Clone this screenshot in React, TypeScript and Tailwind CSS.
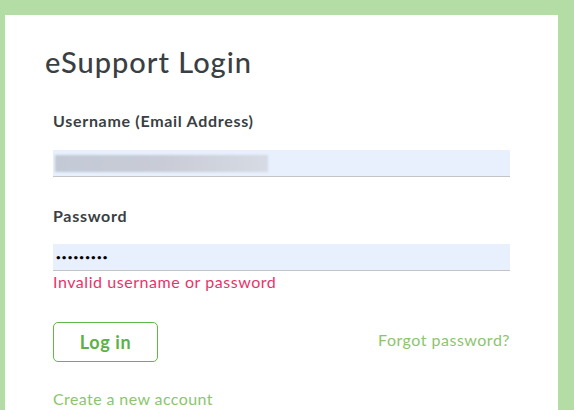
import React from 'react';

const App: React.FC = () => {
  return (
    <div className="min-h-[410px] w-[574px] bg-[#b3dda4] pt-[15px] pl-[5px] pr-[16px] overflow-hidden" style={{ fontFamily: 'Lato, "Open Sans", sans-serif' }}>
      <div className="bg-white h-[395px] pl-[40px] pr-[48px] pt-[29px]">
        {/* Title */}
        <h1 className="text-[29px] leading-[36px] font-medium text-[#3a3f44] tracking-[1px]">eSupport Login</h1>

        <div className="pl-[8px]">
          {/* Username */}
          <label className="block mt-[31px] text-[16px] leading-[20px] font-bold text-[#3a3f44] tracking-[0.7px]">
            Username (Email Address)
          </label>
          <div className="mt-[19px] h-[27px] bg-[#e8f0fe] border-b border-[#c4c4c4] flex items-center">
            <div className="ml-[2px] w-[213px] h-[17px] bg-gradient-to-r from-[#c3cad6] via-[#c9ccd6] to-[#d7dbe4] blur-[1px]" />
          </div>

          {/* Password */}
          <label className="block mt-[29px] text-[16px] leading-[20px] font-bold text-[#3a3f44] tracking-[0.7px]">
            Password
          </label>
          <div className="mt-[18px] h-[27px] bg-[#e8f0fe] border-b border-[#c4c4c4] flex items-center pl-[3px]">
            <span className="text-[8px] tracking-[1.2px] text-black font-bold leading-none">•••••••••</span>
          </div>
          <p className="mt-[1px] text-[16px] leading-[20px] text-[#e8336a] tracking-[0.55px]">Invalid username or password</p>

          {/* Actions */}
          <div className="mt-[30px] flex items-center justify-between">
            <button className="w-[105px] h-[40px] border border-[#5fb847] rounded-[5px] text-[18px] font-bold text-[#5cb247] tracking-[0.6px]">
              Log in
            </button>
            <a className="-mt-[4px] text-[16px] text-[#8cc56e] tracking-[0.5px]">Forgot password?</a>
          </div>

          <a className="block mt-[25px] text-[16px] text-[#8cc56e] tracking-[0.4px]">Create a new account</a>
        </div>
      </div>
    </div>
  );
};

export default App;
